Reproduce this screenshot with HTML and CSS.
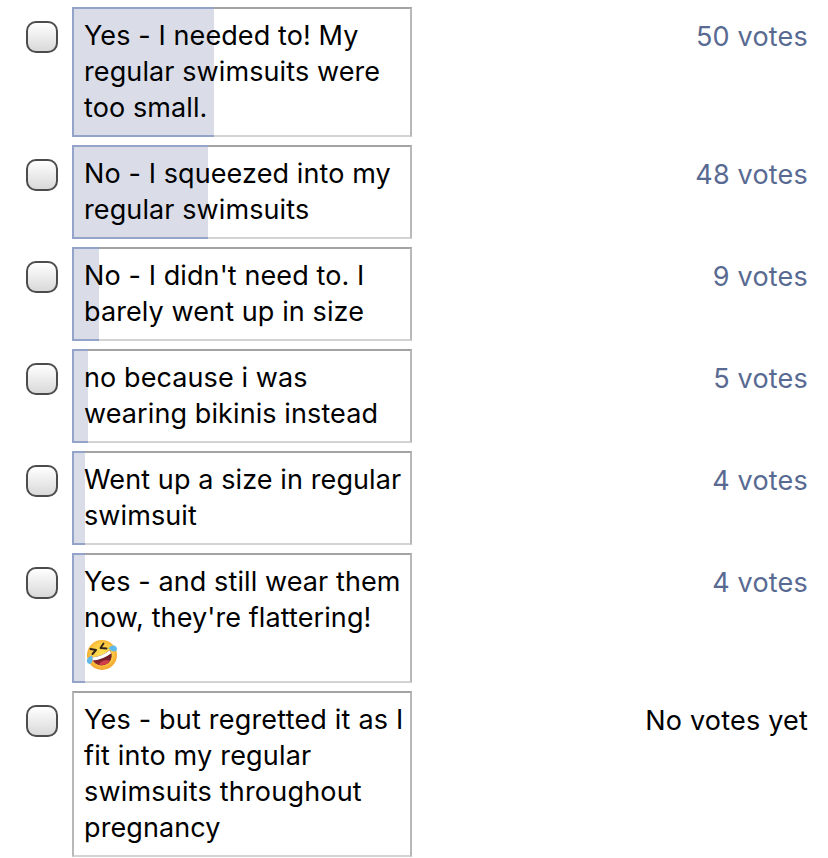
FILE: index.html
```
<!DOCTYPE html>
<html lang="en">
<head>
<meta charset="utf-8">
<title>Poll results</title>
<link rel="stylesheet" href="styles.css">
</head>
<body>
<main class="poll">
  <div class="row">
    <span class="check" role="checkbox" aria-checked="false"></span>
    <div class="option"><div class="fill" style="width:142px"></div><p class="label">Yes - I needed to! My<br>regular swimsuits were<br>too small.</p></div>
    <span class="votes">50 votes</span>
  </div>
  <div class="row">
    <span class="check" role="checkbox" aria-checked="false"></span>
    <div class="option"><div class="fill" style="width:136px"></div><p class="label">No - I squeezed into my<br>regular swimsuits</p></div>
    <span class="votes">48 votes</span>
  </div>
  <div class="row">
    <span class="check" role="checkbox" aria-checked="false"></span>
    <div class="option"><div class="fill" style="width:27px"></div><p class="label">No - I didn't need to. I<br>barely went up in size</p></div>
    <span class="votes">9 votes</span>
  </div>
  <div class="row">
    <span class="check" role="checkbox" aria-checked="false"></span>
    <div class="option"><div class="fill" style="width:16px"></div><p class="label">no because i was<br>wearing bikinis instead</p></div>
    <span class="votes">5 votes</span>
  </div>
  <div class="row">
    <span class="check" role="checkbox" aria-checked="false"></span>
    <div class="option"><div class="fill" style="width:13px"></div><p class="label">Went up a size in regular<br>swimsuit</p></div>
    <span class="votes">4 votes</span>
  </div>
  <div class="row">
    <span class="check" role="checkbox" aria-checked="false"></span>
    <div class="option"><div class="fill" style="width:13px"></div><p class="label">Yes - and still wear them<br>now, they're flattering!<br><svg class="emoji" viewBox="0 0 32 32" role="img" aria-label="Rolling on the floor laughing">
      <defs>
        <radialGradient id="face" cx="50%" cy="45%" r="55%"><stop offset="0" stop-color="#ffe157"/><stop offset=".65" stop-color="#fdc943"/><stop offset="1" stop-color="#f0a02c"/></radialGradient>
        <linearGradient id="mouth" x1="0" y1="0" x2="0" y2="1"><stop offset="0" stop-color="#5a1820"/><stop offset="1" stop-color="#8f2630"/></linearGradient>
      </defs>
      <circle cx="16" cy="16" r="15" fill="url(#face)"/>
      <path d="M5.500 18.500Q16 17.500 24 11Q28 18.500 22.500 24Q16 28.500 9.500 24.500Q6.500 22.500 5.500 18.500Z" fill="url(#mouth)"/>
      <path d="M5.800 18.600Q16 17.500 23.800 11.300Q25 13 25 14.500Q17 20.500 7 21.500Q6 20 5.800 18.600Z" fill="#fff"/>
      <path d="M13 25.500Q16 20.500 23 21.500Q24 22 22 24.200Q18 27 13 25.500Z" fill="#cf404b"/>
      <path d="M4.500 10L10 11L6.500 15M17.500 4.500L14.500 9L20.500 9.500" fill="none" stroke="#30231a" stroke-width="1.900" stroke-linecap="round" stroke-linejoin="round"/>
      <path d="M6 16.500Q1 18 .8 22Q1.500 26 5 24.500Q7.500 22 6 16.500ZM22.500 9.500Q24.500 6 28.500 6.500Q32 8.500 30.500 11.500Q27.500 14 22.500 9.500Z" fill="#60b9e8"/>
    </svg></p></div>
    <span class="votes">4 votes</span>
  </div>
  <div class="row">
    <span class="check" role="checkbox" aria-checked="false"></span>
    <div class="option"><p class="label"><span class="wide">Yes - but regretted it as I<br>fit into my regular<br>swimsuits throughout</span><br>pregnancy</p></div>
    <span class="votes none">No votes yet</span>
  </div>
</main>
</body>
</html>
```
FILE: styles.css
```
* { box-sizing: border-box; }
body {
  margin: 0;
  background: #fff;
  color: #000;
  font: 27px/36px Inter, sans-serif;
  font-feature-settings: "calt" 0;
  letter-spacing: .1px;
  overflow: hidden;
}
.poll {
  display: flex;
  flex-direction: column;
  gap: 8px;
  padding: 7px 20px 1px 26px;
}
.row { display: flex; align-items: flex-start; }
.check {
  width: 32px;
  height: 32px;
  margin: 14px 14px 0 0;
  border: 2px solid #4c4c4c;
  border-radius: 10px;
  background: linear-gradient(#fff, #d9d9d9);
}
.option {
  position: relative;
  width: 340px;
  padding: 9px 0 9px 10px;
  border: 2px solid;
  border-color: #a3a3a3 #b8b8b8 #d3d3d3 #b8b8b8;
}
.fill {
  position: absolute;
  top: -2px;
  bottom: -2px;
  left: -2px;
  background: #dadde8;
  border: 2px solid #94a3c9;
  border-right: 0;
}
.label { position: relative; margin: 0; white-space: nowrap; }
.wide { letter-spacing: .2px; }
.emoji { display: block; width: 32px; height: 32px; margin: 3px 0 1px 2px; }
.votes { margin: 12px 0 0 auto; color: #596a92; letter-spacing: .2px; }
.none { color: #000; }
```
